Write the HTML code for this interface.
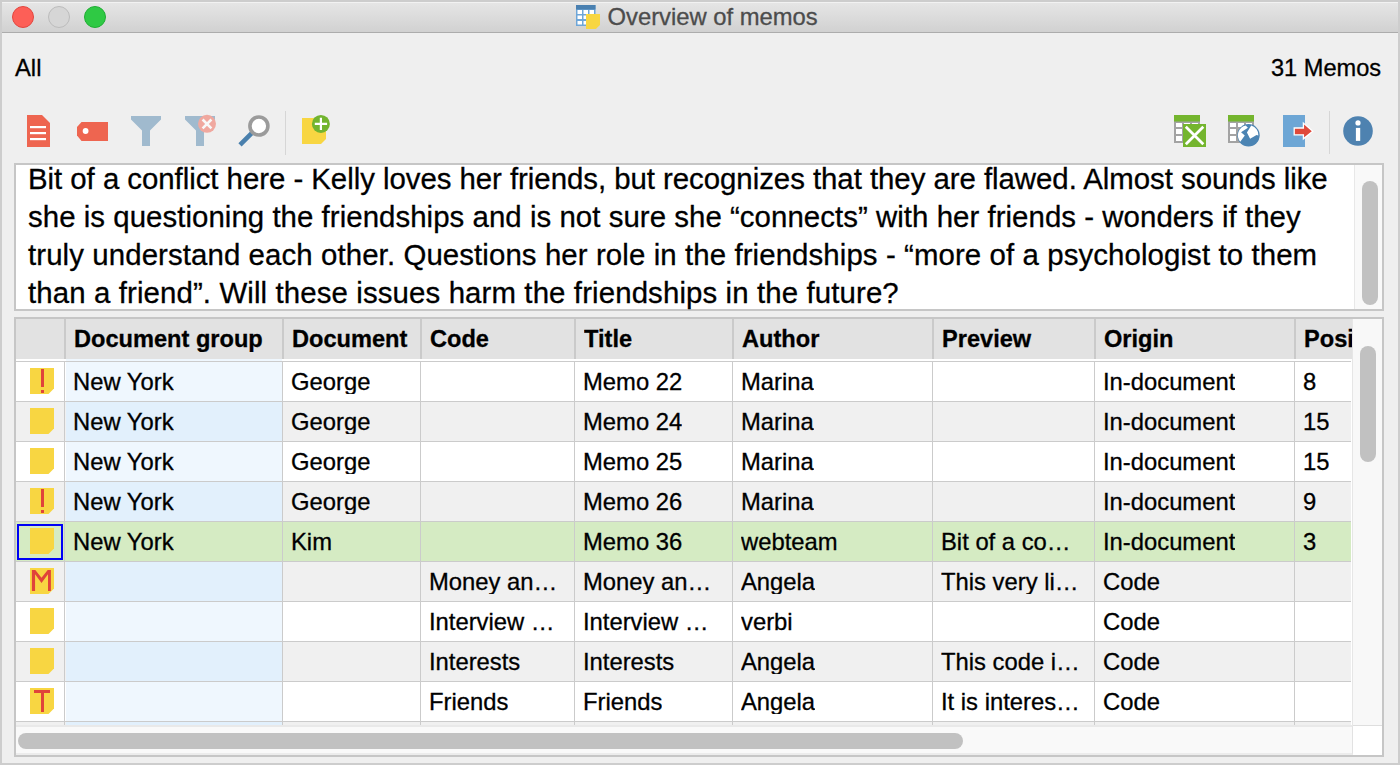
<!DOCTYPE html>
<html><head><meta charset="utf-8">
<style>
*{margin:0;padding:0;box-sizing:border-box}
html,body{width:1400px;height:765px;overflow:hidden;background:#efefef;font-family:"Liberation Sans",sans-serif;color:#000}
.a{position:absolute}
.t{position:absolute;white-space:nowrap;line-height:1;-webkit-text-stroke:0.3px #000}
</style></head><body>

<div class="a" style="left:0;top:0;width:1400px;height:765px;border:2px solid #cdcdcd"></div>
<div class="a" style="left:2px;top:2px;width:1396px;height:30px;background:linear-gradient(#e6e6e6,#d1d1d1)"></div>
<div class="a" style="left:2px;top:2px;width:1396px;height:1px;background:#f2f2f2"></div>
<div class="a" style="left:2px;top:32px;width:1396px;height:1px;background:#acacac"></div>
<div class="a" style="left:12px;top:6px;width:22px;height:22px;border-radius:50%;background:#fd5f57;border:1px solid #e2463f"></div>
<div class="a" style="left:48px;top:6px;width:22px;height:22px;border-radius:50%;background:#d6d6d6;border:1px solid #bcbcbc"></div>
<div class="a" style="left:84px;top:6px;width:22px;height:22px;border-radius:50%;background:#2fc944;border:1px solid #1fae33"></div>
<svg class="a" style="left:576px;top:5px" width="25" height="25" viewBox="0 0 25 25">
<rect x="0" y="0" width="19.5" height="21" fill="#6ea6d8"/>
<rect x="0" y="0" width="19.5" height="4.5" fill="#4a80b0"/>
<rect x="1.5" y="5" width="4.5" height="4" fill="#fff"/><rect x="7.5" y="5" width="4.5" height="4" fill="#fff"/><rect x="13.5" y="5" width="4.5" height="4" fill="#fff"/>
<rect x="1.5" y="10.5" width="4.5" height="3.5" fill="#fff"/><rect x="7.5" y="10.5" width="4.5" height="3.5" fill="#fff"/><rect x="13.5" y="10.5" width="4.5" height="3.5" fill="#fff"/>
<rect x="1.5" y="16" width="4.5" height="3.5" fill="#fff"/><rect x="7.5" y="16" width="4.5" height="3.5" fill="#fff"/><rect x="13.5" y="16" width="4.5" height="3.5" fill="#fff"/>
<path d="M10 9H24V20L19.8 24H10Z" fill="#f8d642"/>
</svg>
<div class="t" style="left:607.5px;top:5px;font-size:23.8px;color:#4c4c4c;-webkit-text-stroke:0.3px #4c4c4c">Overview of memos</div>
<div class="t" style="left:15px;top:56px;font-size:23.8px">All</div>
<div class="t" style="left:1271px;top:57px;font-size:23.6px">31 Memos</div>
<svg class="a" style="left:0;top:100px" width="350" height="60" viewBox="0 100 350 60">
<path d="M27 115H42L50 123V147H27Z" fill="#ee6550"/>
<rect x="30" y="126" width="16" height="2.2" fill="#fff"/><rect x="30" y="132" width="16" height="2.2" fill="#fff"/><rect x="30" y="138" width="16" height="2.2" fill="#fff"/>
<path d="M81.5 122H108V141H81.5L77 135.5V127Z" fill="#ee6550"/>
<circle cx="85.6" cy="131" r="2.9" fill="#fff"/>
<path d="M131 116H161V119.5L150 130.5V146H142V130.5L131 119.5Z" fill="#a0bace"/>
<path d="M185 116H215V119.5L204 130.5V146H196V130.5L185 119.5Z" fill="#a0bace"/>
<circle cx="207" cy="123.8" r="9" fill="#f0a89f"/>
<path d="M202.6 119.5L211.4 128.3M211.4 119.5L202.6 128.3" stroke="#f8f8f8" stroke-width="2.6"/>
<path d="M240 144.8L252 132.8" stroke="#4a80ad" stroke-width="4.6"/>
<circle cx="258.9" cy="126" r="9" fill="#fff" stroke="#9b9b9b" stroke-width="3.6"/>
<rect x="285" y="111" width="1" height="44" fill="#d6d6d6"/>
<path d="M302 118H326V139L321 144H302Z" fill="#f8d642"/>
<circle cx="320.9" cy="123.9" r="9" fill="#72b42f"/>
<path d="M320.9 117.8V130.1M314.8 123.9H327.1" stroke="#fff" stroke-width="2.2"/>
</svg>
<svg class="a" style="left:1160px;top:100px" width="240" height="60" viewBox="1160 100 240 60">
<rect x="1174" y="115" width="26" height="28" fill="#a3a3a3"/>
<rect x="1174" y="115" width="26" height="6.5" fill="#74b52e"/>
<rect x="1176" y="123" width="6" height="4" fill="#fff"/><rect x="1184" y="123" width="6" height="4" fill="#fff"/><rect x="1192" y="123" width="6" height="4" fill="#fff"/>
<rect x="1176" y="129" width="6" height="5" fill="#fff"/><rect x="1176" y="136" width="6" height="5" fill="#fff"/>
<rect x="1183" y="124" width="23" height="23" fill="#74b52e"/>
<path d="M1185.8 126.8L1203.3 144.3M1203.3 126.8L1185.8 144.3" stroke="#fff" stroke-width="2.7"/>
<rect x="1228" y="115" width="26" height="28" fill="#a3a3a3"/>
<rect x="1228" y="115" width="26" height="6.5" fill="#74b52e"/>
<rect x="1230" y="123" width="6" height="4" fill="#fff"/><rect x="1238" y="123" width="6" height="4" fill="#fff"/><rect x="1246" y="123" width="6" height="4" fill="#fff"/>
<rect x="1230" y="129" width="6" height="5" fill="#fff"/><rect x="1230" y="136" width="6" height="5" fill="#fff"/>
<circle cx="1248.5" cy="135.3" r="11.2" fill="#4b84b3"/>
<path d="M1245.76 125.49L1247.92 127.65L1241.06 132.35L1244.78 135.49L1240.27 141.76A10 10 0 0 1 1245.76 125.49Z" fill="#fff"/>
<path d="M1251.25 125.49L1246.94 132.55L1250.08 138.82L1256.55 135.1L1258.4 135.6A10 10 0 0 0 1251.25 125.49Z" fill="#fff"/>
<rect x="1283" y="115" width="22" height="32" fill="#6da6d5"/>
<path d="M1294.2 128H1303.4V123.1L1312.8 131.2L1303.4 138.8V134.8H1294.2Z" fill="#e0493a" stroke="#fff" stroke-width="1.3"/>
<rect x="1329" y="111" width="1" height="43" fill="#d6d6d6"/>
<circle cx="1358" cy="131" r="14.8" fill="#4e82b0"/>
<circle cx="1358" cy="122.9" r="2.6" fill="#fff"/>
<rect x="1355.9" y="127.9" width="4.3" height="13" fill="#fff"/>
</svg>
<div class="a" style="left:14px;top:163px;width:1370px;height:148px;background:#fff;border:2px solid #c6c6c6"></div>
<div class="a" style="left:1354px;top:165px;width:28px;height:144px;background:#f9f9f9;border-left:1px solid #e8e8e8"></div>
<div class="a" style="left:1362px;top:181px;width:16px;height:124px;border-radius:8px;background:#c1c1c1"></div>
<div class="t" style="left:28px;top:164.2px;font-size:29.4px;letter-spacing:-0.038px">Bit of a conflict here - Kelly loves her friends, but recognizes that they are flawed. Almost sounds like</div>
<div class="t" style="left:28px;top:202.2px;font-size:29.4px;letter-spacing:0.05px">she is questioning the friendships and is not sure she “connects” with her friends - wonders if they</div>
<div class="t" style="left:28px;top:239.9px;font-size:29.4px;letter-spacing:0.1px">truly understand each other. Questions her role in the friendships - “more of a psychologist to them</div>
<div class="t" style="left:28px;top:277.6px;font-size:29.4px;letter-spacing:0.12px">than a friend”. Will these issues harm the friendships in the future?</div>
<div class="a" style="left:14px;top:317px;width:1370px;height:440px;background:#fff;border:2px solid #c6c6c6"></div>
<div class="a" style="left:16px;top:319px;width:1336px;height:40px;background:#e2e2e2"></div>
<div class="t" style="left:74px;top:328px;font-size:23.6px;font-weight:bold;width:400px;overflow:hidden">Document group</div>
<div class="t" style="left:292px;top:328px;font-size:23.6px;font-weight:bold;width:400px;overflow:hidden">Document</div>
<div class="t" style="left:430px;top:328px;font-size:23.6px;font-weight:bold;width:400px;overflow:hidden">Code</div>
<div class="t" style="left:584px;top:328px;font-size:23.6px;font-weight:bold;width:400px;overflow:hidden">Title</div>
<div class="t" style="left:742px;top:328px;font-size:23.6px;font-weight:bold;width:400px;overflow:hidden">Author</div>
<div class="t" style="left:942px;top:328px;font-size:23.6px;font-weight:bold;width:400px;overflow:hidden">Preview</div>
<div class="t" style="left:1104px;top:328px;font-size:23.6px;font-weight:bold;width:400px;overflow:hidden">Origin</div>
<div class="t" style="left:1304px;top:328px;font-size:23.6px;font-weight:bold;width:48px;overflow:hidden">Posi</div>
<div class="a" style="left:64px;top:319px;width:2px;height:40px;background:#cacaca"></div>
<div class="a" style="left:282px;top:319px;width:2px;height:40px;background:#cacaca"></div>
<div class="a" style="left:420px;top:319px;width:2px;height:40px;background:#cacaca"></div>
<div class="a" style="left:574px;top:319px;width:2px;height:40px;background:#cacaca"></div>
<div class="a" style="left:732px;top:319px;width:2px;height:40px;background:#cacaca"></div>
<div class="a" style="left:932px;top:319px;width:2px;height:40px;background:#cacaca"></div>
<div class="a" style="left:1094px;top:319px;width:2px;height:40px;background:#cacaca"></div>
<div class="a" style="left:1294px;top:319px;width:2px;height:40px;background:#cacaca"></div>
<div class="a" style="left:16px;top:359px;width:1335px;height:42px;background:#ffffff"></div>
<div class="a" style="left:66px;top:359px;width:216px;height:42px;background:#eff7fe"></div>
<div class="a" style="left:16px;top:361px;width:1335px;height:1px;background:#cbcbcb"></div>
<svg class="a" style="left:30px;top:368px" width="24" height="26" viewBox="0 0 24 26"><path d="M0 0H24V20.5L18.5 26H0Z" fill="#f8d642"/><rect x="11" y="1" width="3" height="18" fill="#e0443a"/><rect x="11" y="22" width="3" height="3" fill="#e0443a"/></svg>
<div class="t" style="left:73px;top:370px;font-size:23.8px;max-width:228px;overflow:hidden">New York</div>
<div class="t" style="left:291px;top:370px;font-size:23.8px;max-width:148px;overflow:hidden">George</div>
<div class="t" style="left:583px;top:370px;font-size:23.8px;max-width:168px;overflow:hidden">Memo 22</div>
<div class="t" style="left:741px;top:370px;font-size:23.8px;max-width:210px;overflow:hidden">Marina</div>
<div class="t" style="left:1103px;top:370px;font-size:23.8px;max-width:210px;overflow:hidden">In-document</div>
<div class="t" style="left:1303px;top:370px;font-size:23.8px;max-width:67px;overflow:hidden">8</div>
<div class="a" style="left:16px;top:401px;width:1335px;height:40px;background:#f0f0f0"></div>
<div class="a" style="left:66px;top:401px;width:216px;height:40px;background:#e2f0fc"></div>
<div class="a" style="left:16px;top:401px;width:1335px;height:1px;background:#cbcbcb"></div>
<svg class="a" style="left:30px;top:408px" width="24" height="26" viewBox="0 0 24 26"><path d="M0 0H24V20.5L18.5 26H0Z" fill="#f8d642"/></svg>
<div class="t" style="left:73px;top:410px;font-size:23.8px;max-width:228px;overflow:hidden">New York</div>
<div class="t" style="left:291px;top:410px;font-size:23.8px;max-width:148px;overflow:hidden">George</div>
<div class="t" style="left:583px;top:410px;font-size:23.8px;max-width:168px;overflow:hidden">Memo 24</div>
<div class="t" style="left:741px;top:410px;font-size:23.8px;max-width:210px;overflow:hidden">Marina</div>
<div class="t" style="left:1103px;top:410px;font-size:23.8px;max-width:210px;overflow:hidden">In-document</div>
<div class="t" style="left:1303px;top:410px;font-size:23.8px;max-width:67px;overflow:hidden">15</div>
<div class="a" style="left:16px;top:441px;width:1335px;height:40px;background:#ffffff"></div>
<div class="a" style="left:66px;top:441px;width:216px;height:40px;background:#eff7fe"></div>
<div class="a" style="left:16px;top:441px;width:1335px;height:1px;background:#cbcbcb"></div>
<svg class="a" style="left:30px;top:448px" width="24" height="26" viewBox="0 0 24 26"><path d="M0 0H24V20.5L18.5 26H0Z" fill="#f8d642"/></svg>
<div class="t" style="left:73px;top:450px;font-size:23.8px;max-width:228px;overflow:hidden">New York</div>
<div class="t" style="left:291px;top:450px;font-size:23.8px;max-width:148px;overflow:hidden">George</div>
<div class="t" style="left:583px;top:450px;font-size:23.8px;max-width:168px;overflow:hidden">Memo 25</div>
<div class="t" style="left:741px;top:450px;font-size:23.8px;max-width:210px;overflow:hidden">Marina</div>
<div class="t" style="left:1103px;top:450px;font-size:23.8px;max-width:210px;overflow:hidden">In-document</div>
<div class="t" style="left:1303px;top:450px;font-size:23.8px;max-width:67px;overflow:hidden">15</div>
<div class="a" style="left:16px;top:481px;width:1335px;height:40px;background:#f0f0f0"></div>
<div class="a" style="left:66px;top:481px;width:216px;height:40px;background:#e2f0fc"></div>
<div class="a" style="left:16px;top:481px;width:1335px;height:1px;background:#cbcbcb"></div>
<svg class="a" style="left:30px;top:488px" width="24" height="26" viewBox="0 0 24 26"><path d="M0 0H24V20.5L18.5 26H0Z" fill="#f8d642"/><rect x="11" y="1" width="3" height="18" fill="#e0443a"/><rect x="11" y="22" width="3" height="3" fill="#e0443a"/></svg>
<div class="t" style="left:73px;top:490px;font-size:23.8px;max-width:228px;overflow:hidden">New York</div>
<div class="t" style="left:291px;top:490px;font-size:23.8px;max-width:148px;overflow:hidden">George</div>
<div class="t" style="left:583px;top:490px;font-size:23.8px;max-width:168px;overflow:hidden">Memo 26</div>
<div class="t" style="left:741px;top:490px;font-size:23.8px;max-width:210px;overflow:hidden">Marina</div>
<div class="t" style="left:1103px;top:490px;font-size:23.8px;max-width:210px;overflow:hidden">In-document</div>
<div class="t" style="left:1303px;top:490px;font-size:23.8px;max-width:67px;overflow:hidden">9</div>
<div class="a" style="left:16px;top:521px;width:1335px;height:40px;background:#d5ebc3"></div>
<div class="a" style="left:66px;top:521px;width:216px;height:40px;background:#d5ebc3"></div>
<div class="a" style="left:16px;top:521px;width:1335px;height:1px;background:#cbcbcb"></div>
<svg class="a" style="left:30px;top:528px" width="24" height="26" viewBox="0 0 24 26"><path d="M0 0H24V20.5L18.5 26H0Z" fill="#f8d642"/></svg>
<div class="t" style="left:73px;top:530px;font-size:23.8px;max-width:228px;overflow:hidden">New York</div>
<div class="t" style="left:291px;top:530px;font-size:23.8px;max-width:148px;overflow:hidden">Kim</div>
<div class="t" style="left:583px;top:530px;font-size:23.8px;max-width:168px;overflow:hidden">Memo 36</div>
<div class="t" style="left:741px;top:530px;font-size:23.8px;max-width:210px;overflow:hidden">webteam</div>
<div class="t" style="left:941px;top:530px;font-size:23.8px;max-width:172px;overflow:hidden">Bit of a co…</div>
<div class="t" style="left:1103px;top:530px;font-size:23.8px;max-width:210px;overflow:hidden">In-document</div>
<div class="t" style="left:1303px;top:530px;font-size:23.8px;max-width:67px;overflow:hidden">3</div>
<div class="a" style="left:16px;top:561px;width:1335px;height:40px;background:#f0f0f0"></div>
<div class="a" style="left:66px;top:561px;width:216px;height:40px;background:#e2f0fc"></div>
<div class="a" style="left:16px;top:561px;width:1335px;height:1px;background:#cbcbcb"></div>
<svg class="a" style="left:30px;top:568px" width="24" height="26" viewBox="0 0 24 26"><path d="M0 0H24V20.5L18.5 26H0Z" fill="#f8d642"/><path d="M1.9 1.9H5.3L11.5 9.8L17.7 1.9H20.9V22.9H18V6.2L11.5 14.9L5.06 6.2V22.9H1.9Z" fill="#e0443a"/></svg>
<div class="t" style="left:429px;top:570px;font-size:23.8px;max-width:164px;overflow:hidden">Money an…</div>
<div class="t" style="left:583px;top:570px;font-size:23.8px;max-width:168px;overflow:hidden">Money an…</div>
<div class="t" style="left:741px;top:570px;font-size:23.8px;max-width:210px;overflow:hidden">Angela</div>
<div class="t" style="left:941px;top:570px;font-size:23.8px;max-width:172px;overflow:hidden">This very li…</div>
<div class="t" style="left:1103px;top:570px;font-size:23.8px;max-width:210px;overflow:hidden">Code</div>
<div class="a" style="left:16px;top:601px;width:1335px;height:40px;background:#ffffff"></div>
<div class="a" style="left:66px;top:601px;width:216px;height:40px;background:#eff7fe"></div>
<div class="a" style="left:16px;top:601px;width:1335px;height:1px;background:#cbcbcb"></div>
<svg class="a" style="left:30px;top:608px" width="24" height="26" viewBox="0 0 24 26"><path d="M0 0H24V20.5L18.5 26H0Z" fill="#f8d642"/></svg>
<div class="t" style="left:429px;top:610px;font-size:23.8px;max-width:164px;overflow:hidden">Interview …</div>
<div class="t" style="left:583px;top:610px;font-size:23.8px;max-width:168px;overflow:hidden">Interview …</div>
<div class="t" style="left:741px;top:610px;font-size:23.8px;max-width:210px;overflow:hidden">verbi</div>
<div class="t" style="left:1103px;top:610px;font-size:23.8px;max-width:210px;overflow:hidden">Code</div>
<div class="a" style="left:16px;top:641px;width:1335px;height:40px;background:#f0f0f0"></div>
<div class="a" style="left:66px;top:641px;width:216px;height:40px;background:#e2f0fc"></div>
<div class="a" style="left:16px;top:641px;width:1335px;height:1px;background:#cbcbcb"></div>
<svg class="a" style="left:30px;top:648px" width="24" height="26" viewBox="0 0 24 26"><path d="M0 0H24V20.5L18.5 26H0Z" fill="#f8d642"/></svg>
<div class="t" style="left:429px;top:650px;font-size:23.8px;max-width:164px;overflow:hidden">Interests</div>
<div class="t" style="left:583px;top:650px;font-size:23.8px;max-width:168px;overflow:hidden">Interests</div>
<div class="t" style="left:741px;top:650px;font-size:23.8px;max-width:210px;overflow:hidden">Angela</div>
<div class="t" style="left:941px;top:650px;font-size:23.8px;max-width:172px;overflow:hidden">This code i…</div>
<div class="t" style="left:1103px;top:650px;font-size:23.8px;max-width:210px;overflow:hidden">Code</div>
<div class="a" style="left:16px;top:681px;width:1335px;height:40px;background:#ffffff"></div>
<div class="a" style="left:66px;top:681px;width:216px;height:40px;background:#eff7fe"></div>
<div class="a" style="left:16px;top:681px;width:1335px;height:1px;background:#cbcbcb"></div>
<svg class="a" style="left:30px;top:688px" width="24" height="26" viewBox="0 0 24 26"><path d="M0 0H24V20.5L18.5 26H0Z" fill="#f8d642"/><rect x="4" y="2" width="16" height="3" fill="#e0443a"/><rect x="11" y="2" width="3" height="22" fill="#e0443a"/></svg>
<div class="t" style="left:429px;top:690px;font-size:23.8px;max-width:164px;overflow:hidden">Friends</div>
<div class="t" style="left:583px;top:690px;font-size:23.8px;max-width:168px;overflow:hidden">Friends</div>
<div class="t" style="left:741px;top:690px;font-size:23.8px;max-width:210px;overflow:hidden">Angela</div>
<div class="t" style="left:941px;top:690px;font-size:23.8px;max-width:172px;overflow:hidden">It is interes…</div>
<div class="t" style="left:1103px;top:690px;font-size:23.8px;max-width:210px;overflow:hidden">Code</div>
<div class="a" style="left:16px;top:721px;width:1335px;height:4px;background:#f0f0f0"></div>
<div class="a" style="left:66px;top:721px;width:216px;height:4px;background:#e2f0fc"></div>
<div class="a" style="left:16px;top:721px;width:1335px;height:1px;background:#cbcbcb"></div>
<div class="a" style="left:17px;top:524px;width:46px;height:36px;border:2px solid #0000f5"></div>
<div class="a" style="left:64px;top:361px;width:1px;height:364px;background:#cbcbcb"></div>
<div class="a" style="left:282px;top:361px;width:1px;height:364px;background:#cbcbcb"></div>
<div class="a" style="left:420px;top:361px;width:1px;height:364px;background:#cbcbcb"></div>
<div class="a" style="left:574px;top:361px;width:1px;height:364px;background:#cbcbcb"></div>
<div class="a" style="left:732px;top:361px;width:1px;height:364px;background:#cbcbcb"></div>
<div class="a" style="left:932px;top:361px;width:1px;height:364px;background:#cbcbcb"></div>
<div class="a" style="left:1094px;top:361px;width:1px;height:364px;background:#cbcbcb"></div>
<div class="a" style="left:1294px;top:361px;width:1px;height:364px;background:#cbcbcb"></div>
<div class="a" style="left:1352px;top:319px;width:30px;height:406px;background:#f8f8f8;border-left:1px solid #e6e6e6"></div>
<div class="a" style="left:1360px;top:346px;width:16px;height:116px;border-radius:8px;background:#c1c1c1"></div>
<div class="a" style="left:16px;top:725px;width:1337px;height:30px;background:#f9f9f9;border-top:2px solid #e9e9e9;border-bottom:2px solid #ececec;border-right:1px solid #e2e2e2"></div>
<div class="a" style="left:18px;top:733px;width:945px;height:16px;border-radius:8px;background:#c1c1c1"></div>
<div class="a" style="left:1353px;top:725px;width:29px;height:30px;background:#fff;border-top:1px solid #dedede"></div>
</body></html>
